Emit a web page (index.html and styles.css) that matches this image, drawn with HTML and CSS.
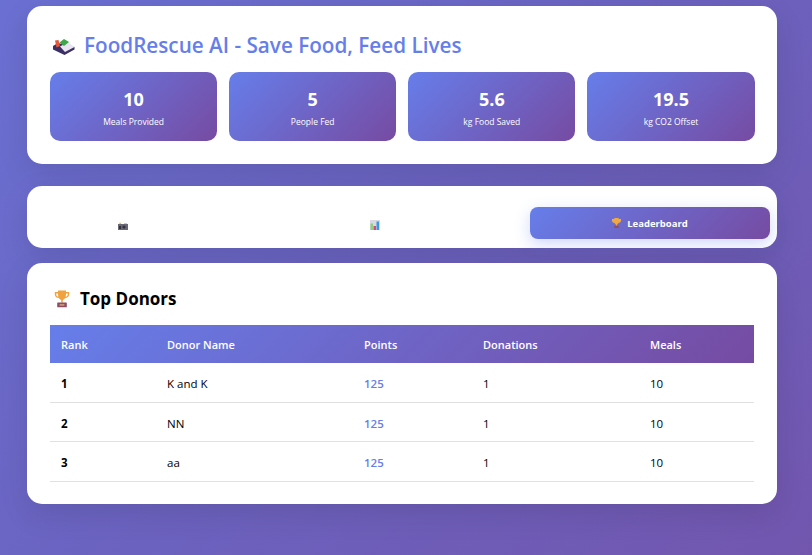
FILE: index.html
```html
<!DOCTYPE html>
<html lang="en">
<head>
    <meta charset="UTF-8">
    <meta name="viewport" content="width=device-width, initial-scale=1.0">
    <title>FoodRescue AI</title>
    <link rel="stylesheet" href="styles.css">
</head>
<body>
    <div class="container">
        <div class="header card">
            <h1>
                <svg class="icon-bento" viewBox="0 0 22 16" aria-hidden="true">
                    <path d="M0 7 L5 4 L21.5 8 L21.5 10.5 L11.5 16 L0 10.5 Z" fill="#3b2f63"/>
                    <path d="M7 7.5 L15 3 L21.5 8 L12 13 Z" fill="#e9e6f2"/>
                    <path d="M2 1.5 L5.5 1 L7 7 L3.5 8.5 Z" fill="#e8553a"/>
                    <path d="M6.5 3.5 L11 0 L16 3 L11 7 Z" fill="#3fa64a"/>
                </svg>
                <span>FoodRescue AI - Save Food, Feed Lives</span>
            </h1>
            <div class="stats">
                <div class="stat"><strong>10</strong><span>Meals Provided</span></div>
                <div class="stat"><strong>5</strong><span>People Fed</span></div>
                <div class="stat"><strong>5.6</strong><span>kg Food Saved</span></div>
                <div class="stat"><strong>19.5</strong><span>kg CO2 Offset</span></div>
            </div>
        </div>

        <div class="tabs card">
            <button class="tab tab-first" type="button">
                <svg class="tab-icon" viewBox="0 0 10 8" aria-hidden="true">
                    <rect x="0" y="2" width="10" height="6" fill="#6b6875"/>
                    <path d="M1 2 L2 0 L3.5 2 Z" fill="#f2c14e"/>
                    <rect x="6" y="1" width="3" height="1" fill="#c9c7d1"/>
                    <rect x="1" y="4" width="2" height="3" fill="#33313d"/>
                    <circle cx="6" cy="5" r="1.6" fill="#33313d"/>
                </svg>
            </button>
            <button class="tab tab-second" type="button">
                <svg class="tab-icon tab-icon-chart" viewBox="0 0 10 10" aria-hidden="true">
                    <rect width="10" height="10" fill="#d9d9e2"/>
                    <rect x="0.5" y="3.5" width="2.5" height="6.5" fill="#8fd07c"/>
                    <rect x="3.5" y="6" width="2.5" height="4" fill="#e0457f"/>
                    <rect x="6.5" y="1.5" width="2.5" height="8.5" fill="#3a97e0"/>
                </svg>
            </button>
            <button class="tab active" type="button">
                <svg class="tab-trophy" viewBox="0 0 20 22" aria-hidden="true">
                    <path d="M5 0 H15 V2 H20 V6 C20 9 17 10.5 15 10.5 C14 12.5 12.5 13 11.5 13.5 V17 H8.5 V13.5 C7.5 13 6 12.5 5 10.5 C3 10.5 0 9 0 6 V2 H5 Z" fill="#f0a840"/>
                    <rect x="5" y="17" width="10" height="5" fill="#8e4d63"/>
                </svg>
                <span>Leaderboard</span>
            </button>
        </div>

        <div class="content card">
            <h2>
                <svg class="icon-trophy" viewBox="0 0 20 22" aria-hidden="true">
                    <path d="M5 1 H15 V3 H19 V6 C19 9 16 10.5 14 10.5 C13 12 12 12.5 11 13 V16 H9 V13 C8 12.5 7 12 6 10.5 C4 10.5 1 9 1 6 V3 H5 Z M2.8 4.8 V6 C2.8 7.5 4 8.5 5.3 8.7 L5 4.8 Z M17.2 4.8 H15 L14.7 8.7 C16 8.5 17.2 7.5 17.2 6 Z" fill="#f0a23e" fill-rule="evenodd"/>
                    <rect x="4" y="16" width="12" height="6" rx="0.5" fill="#8e4d63"/>
                    <rect x="7" y="18" width="6" height="2" fill="#c9a07a"/>
                </svg>
                <span>Top Donors</span>
            </h2>
            <table class="board">
                <thead>
                    <tr>
                        <th class="col-rank">Rank</th>
                        <th class="col-name">Donor Name</th>
                        <th class="col-points">Points</th>
                        <th class="col-donations">Donations</th>
                        <th>Meals</th>
                    </tr>
                </thead>
                <tbody>
                    <tr><td class="rank">1</td><td>K and K</td><td class="points">125</td><td>1</td><td>10</td></tr>
                    <tr><td class="rank">2</td><td>NN</td><td class="points">125</td><td>1</td><td>10</td></tr>
                    <tr><td class="rank">3</td><td>aa</td><td class="points">125</td><td>1</td><td>10</td></tr>
                </tbody>
            </table>
        </div>
    </div>
</body>
</html>
```

FILE: styles.css
```css
* {
    box-sizing: border-box;
}
html, body {
    height: 100%;
}
body {
    margin: 0;
    overflow: hidden;
    font-family: 'Open Sans', 'Noto Sans', sans-serif;
    color: #000;
    background: linear-gradient(135deg, #6a70d2 0%, #6b62bf 50%, #7256ae 100%);
}
.container {
    width: 750px;
    margin-left: 27px;
    padding-top: 6px;
}
.card {
    background: #fff;
    border-radius: 15px;
    box-shadow: 0 10px 30px rgba(0, 0, 0, 0.1);
}
.header {
    height: 158px;
    padding: 23px 22.5px 0 23px;
    margin-bottom: 22px;
}
.header h1 {
    display: flex;
    align-items: center;
    gap: 9px;
    margin: 0 0 11px;
    height: 32px;
    font-size: 20.7px;
    font-weight: 600;
    color: #667eea;
}
.icon-bento {
    width: 22px;
    height: 16px;
    margin: 3px 0 0 3px;
}
.stats {
    display: grid;
    grid-template-columns: repeat(4, 1fr);
    gap: 12px;
}
.stat {
    height: 69px;
    padding-top: 15px;
    border-radius: 10px;
    background: linear-gradient(135deg, #667eea 0%, #764ba2 100%);
    color: #fff;
    text-align: center;
}
.stat strong {
    display: block;
    font-size: 18px;
    font-weight: 700;
    line-height: 25px;
}
.stat span {
    display: block;
    margin-top: 3px;
    font-size: 8.5px;
    line-height: 13px;
}
.tabs {
    display: grid;
    grid-template-columns: repeat(3, 1fr);
    gap: 8px;
    height: 62px;
    padding: 24px 7px 6px;
    margin-bottom: 15px;
}
.tab {
    display: flex;
    align-items: center;
    justify-content: flex-start;
    height: 32px;
    padding: 0;
    border: none;
    border-radius: 8px;
    background: transparent;
    font-family: inherit;
}
.tab-first {
    padding-left: 84px;
}
.tab-second {
    padding-left: 88px;
}
.tab-icon {
    width: 10px;
    height: 8px;
}
.tab-icon-chart {
    height: 10px;
    margin-bottom: 2px;
}
.tab.active {
    justify-content: center;
    gap: 6px;
    background: linear-gradient(135deg, #667eea 0%, #764ba2 100%);
    color: #fff;
    font-size: 9.5px;
    font-weight: 700;
    transform: translateY(-3px);
    box-shadow: 0 5px 15px rgba(102, 126, 234, 0.3);
}
.tab-trophy {
    width: 9px;
    height: 10px;
}
.content {
    height: 241px;
    padding: 21px 23px 0;
}
.content h2 {
    display: flex;
    align-items: center;
    gap: 10px;
    margin: 0 0 13px;
    height: 28px;
    font-size: 17px;
    font-weight: 700;
}
.icon-trophy {
    width: 16px;
    height: 19px;
    margin-left: 4px;
}
.board {
    width: 704px;
    border-collapse: collapse;
    table-layout: fixed;
    font-size: 11.5px;
}
.board thead tr {
    background: linear-gradient(135deg, #667eea 0%, #764ba2 100%);
}
.board th {
    height: 38px;
    padding: 0 11px;
    color: #fff;
    font-size: 11px;
    font-weight: 600;
    text-align: left;
}
.col-rank {
    width: 106px;
}
.col-name {
    width: 197px;
}
.col-points {
    width: 119px;
}
.col-donations {
    width: 167px;
}
.board td {
    height: 39.4px;
    padding: 2px 11px 0;
    border-bottom: 1px solid #e0e0e0;
}
.rank {
    font-weight: 700;
}
.points {
    font-weight: 600;
    color: #667eea;
}
```
